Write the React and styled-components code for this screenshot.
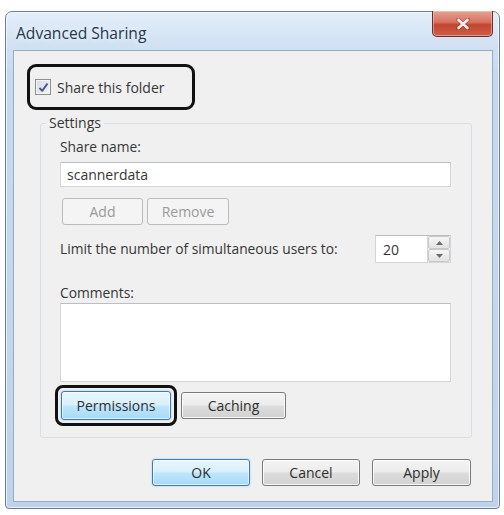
import React from "react";
import styled, { createGlobalStyle } from "styled-components";

const Global = createGlobalStyle`
  html, body { margin: 0; background: #ffffff; }
  body {
    font-family: "Open Sans", "Noto Sans", sans-serif;
    font-size: 13px;
    color: #363636;
  }
`;

const Page = styled.div`
  width: 504px;
  height: 515px;
  box-sizing: border-box;
  padding: 11px 4px 6px 5px;
`;

const Window = styled.div`
  height: 100%;
  box-sizing: border-box;
  border: 1px solid #6f7f91;
  border-radius: 7px 7px 4px 4px;
  background: linear-gradient(180deg, #e4eef9 0px, #d3e3f4 28px, #c6daef 60px, #bfd4ec 100%);
  box-shadow: inset 0 0 0 1px rgba(255, 255, 255, 0.6);
  padding: 0 6px 6px 7px;
  display: flex;
  flex-direction: column;
`;

const TitleBar = styled.div`
  height: 38px;
  display: flex;
  align-items: flex-start;
  justify-content: space-between;
`;

const Title = styled.div`
  padding: 10px 0 0 3px;
  font-size: 15.6px;
  color: #24374d;
  text-shadow: 0 0 6px rgba(255, 255, 255, 0.9);
`;

const CloseButton = styled.div`
  width: 61px;
  height: 26px;
  margin-top: -1px;
  box-sizing: border-box;
  border: 1px solid #6b2f28;
  border-top: none;
  border-radius: 0 0 5px 5px;
  background: linear-gradient(180deg, #e6a294 0%, #d5725f 45%, #c4442f 55%, #cd5f4a 100%);
  box-shadow: inset 0 0 0 1px rgba(255, 210, 200, 0.5);
  display: flex;
  align-items: center;
  justify-content: center;
`;

const Client = styled.div`
  flex: 1;
  border: 1px solid #98abc0;
  background: #f0f0f0;
  padding: 13px 20px 0 13px;
  display: flex;
  flex-direction: column;
`;

const Callout = styled.div`
  box-sizing: border-box;
  border: 3px solid #111;
  border-radius: ${(p) => p.$radius || 9}px;
  display: flex;
  align-items: center;
`;

const ShareBox = styled(Callout)`
  width: 168px;
  height: 46px;
  padding-left: 5px;
  gap: 6px;
  font-size: 14px;
`;

const CheckBox = styled.div`
  width: 16px;
  height: 16px;
  box-sizing: border-box;
  border: 1px solid #8e8f8f;
  background: linear-gradient(135deg, #d8d9e2, #f4f4f7);
  box-shadow: inset 0 0 0 1px #f4f4f4;
  display: flex;
  align-items: center;
  justify-content: center;
`;

const Group = styled.fieldset`
  margin: 4px 0 0 13px;
  padding: 5px 20px 11px 19px;
  border: 1px solid #d5dfe5;
  border-radius: 3px;
  min-width: 0;
  display: flex;
  flex-direction: column;
`;

const Legend = styled.legend`
  margin-left: -14px;
  padding: 0 3px;
  line-height: 18px;
  font-size: 14px;
`;

const Label = styled.div`
  line-height: 20px;
  font-size: 13.8px;
  margin-top: ${(p) => p.$top || 0}px;
`;

const TextBox = styled.div`
  box-sizing: border-box;
  height: ${(p) => p.$height}px;
  margin-top: ${(p) => p.$top || 0}px;
  border: 1px solid #d2d6dc;
  border-top-color: #b9bec5;
  background: #ffffff;
  padding: 2px 6px;
  font-size: 14px;
  line-height: 19px;
`;

const Row = styled.div`
  display: flex;
  align-items: center;
  gap: ${(p) => p.$gap || 0}px;
  margin-top: ${(p) => p.$top || 0}px;
  margin-left: ${(p) => p.$left || 0}px;
`;

const Button = styled.div`
  box-sizing: border-box;
  width: ${(p) => p.$w}px;
  height: ${(p) => p.$h || 27}px;
  border: 1px solid #7a7a7a;
  border-radius: 3px;
  background: linear-gradient(180deg, #f4f4f4 0%, #ececec 48%, #dcdcdc 52%, #d2d2d2 100%);
  box-shadow: inset 0 0 0 1px rgba(255, 255, 255, 0.85);
  display: flex;
  align-items: center;
  justify-content: center;
  font-size: 14px;
  color: #2e2e2e;

  ${(p) =>
    p.$disabled &&
    `
    border-color: #b8bcbf;
    background: #f4f4f4;
    box-shadow: none;
    color: #9a9a9a;
  `}

  ${(p) =>
    p.$blue &&
    `
    border-color: #3d7cae;
    background: linear-gradient(180deg, #e8f5fc 0%, #d9f0fc 48%, #bee6fd 52%, #a7d9f5 100%);
    box-shadow: inset 0 0 0 1px rgba(255, 255, 255, 0.6), 0 0 2px rgba(80, 170, 230, 0.6);
  `}
`;

const Spin = styled.div`
  margin-left: auto;
  width: 76px;
  height: 28px;
  box-sizing: border-box;
  border: 1px solid #d2d6dc;
  border-top-color: #b9bec5;
  background: #ffffff;
  display: flex;
`;

const SpinValue = styled.div`
  flex: 1;
  padding-left: 7px;
  display: flex;
  align-items: center;
  font-size: 14px;
`;

const SpinButtons = styled.div`
  width: 22px;
  display: flex;
  flex-direction: column;
  border-left: 1px solid #d6d6d6;
`;

const SpinPart = styled.div`
  flex: 1;
  display: flex;
  align-items: center;
  justify-content: center;
  background: linear-gradient(180deg, #f6f6f6, #e2e2e2);
  border: 1px solid #c9c9c9;
  border-radius: 2px;
`;

const PermBox = styled(Callout)`
  margin-left: -5px;
  padding: 3px;
  border-radius: 8px;
`;

const Footer = styled.div`
  display: flex;
  justify-content: flex-end;
  gap: 12px;
  margin-top: 21px;
  margin-right: 1px;
`;

const Arrow = ({ up }) => (
  <svg width="7" height="4" viewBox="0 0 7 4">
    <path d={up ? "M0 4 L3.5 0 L7 4 Z" : "M0 0 L3.5 4 L7 0 Z"} fill="#6a6a6a" />
  </svg>
);

export default function App() {
  return (
    <>
      <Global />
      <Page>
        <Window>
          <TitleBar>
            <Title>Advanced Sharing</Title>
            <CloseButton>
              <svg width="14" height="12" viewBox="0 0 14 12">
                <path
                  d="M2 1.5 L12 10.5 M12 1.5 L2 10.5"
                  stroke="#5a1f18"
                  strokeWidth="4"
                  strokeLinecap="round"
                  opacity="0.3"
                />
                <path
                  d="M2.5 2 L11.5 10 M11.5 2 L2.5 10"
                  stroke="#f6eeec"
                  strokeWidth="2.6"
                  strokeLinecap="round"
                />
              </svg>
            </CloseButton>
          </TitleBar>
          <Client>
            <ShareBox>
              <CheckBox>
                <svg width="11" height="11" viewBox="0 0 11 11">
                  <path
                    d="M1.5 5.8 L4.2 8.8 L9.5 1.5"
                    stroke="#4b569a"
                    strokeWidth="2"
                    fill="none"
                    strokeLinejoin="round"
                  />
                </svg>
              </CheckBox>
              Share this folder
            </ShareBox>

            <Group>
              <Legend>Settings</Legend>
              <Label>Share name:</Label>
              <TextBox $height={25} $top={5}>scannerdata</TextBox>
              <Row $gap={4} $top={11} $left={2}>
                <Button $w={81} $disabled>Add</Button>
                <Button $w={82} $disabled>Remove</Button>
              </Row>
              <Row $top={10}>
                <Label>Limit the number of simultaneous users to:</Label>
                <Spin>
                  <SpinValue>20</SpinValue>
                  <SpinButtons>
                    <SpinPart><Arrow up /></SpinPart>
                    <SpinPart><Arrow /></SpinPart>
                  </SpinButtons>
                </Spin>
              </Row>
              <Label $top={20}>Comments:</Label>
              <TextBox $height={79} />
              <Row $gap={4} $top={3}>
                <PermBox>
                  <Button $w={110} $h={29} $blue>Permissions</Button>
                </PermBox>
                <Button $w={105}>Caching</Button>
              </Row>
            </Group>

            <Footer>
              <Button $w={98} $blue>OK</Button>
              <Button $w={98}>Cancel</Button>
              <Button $w={99}>Apply</Button>
            </Footer>
          </Client>
        </Window>
      </Page>
    </>
  );
}
